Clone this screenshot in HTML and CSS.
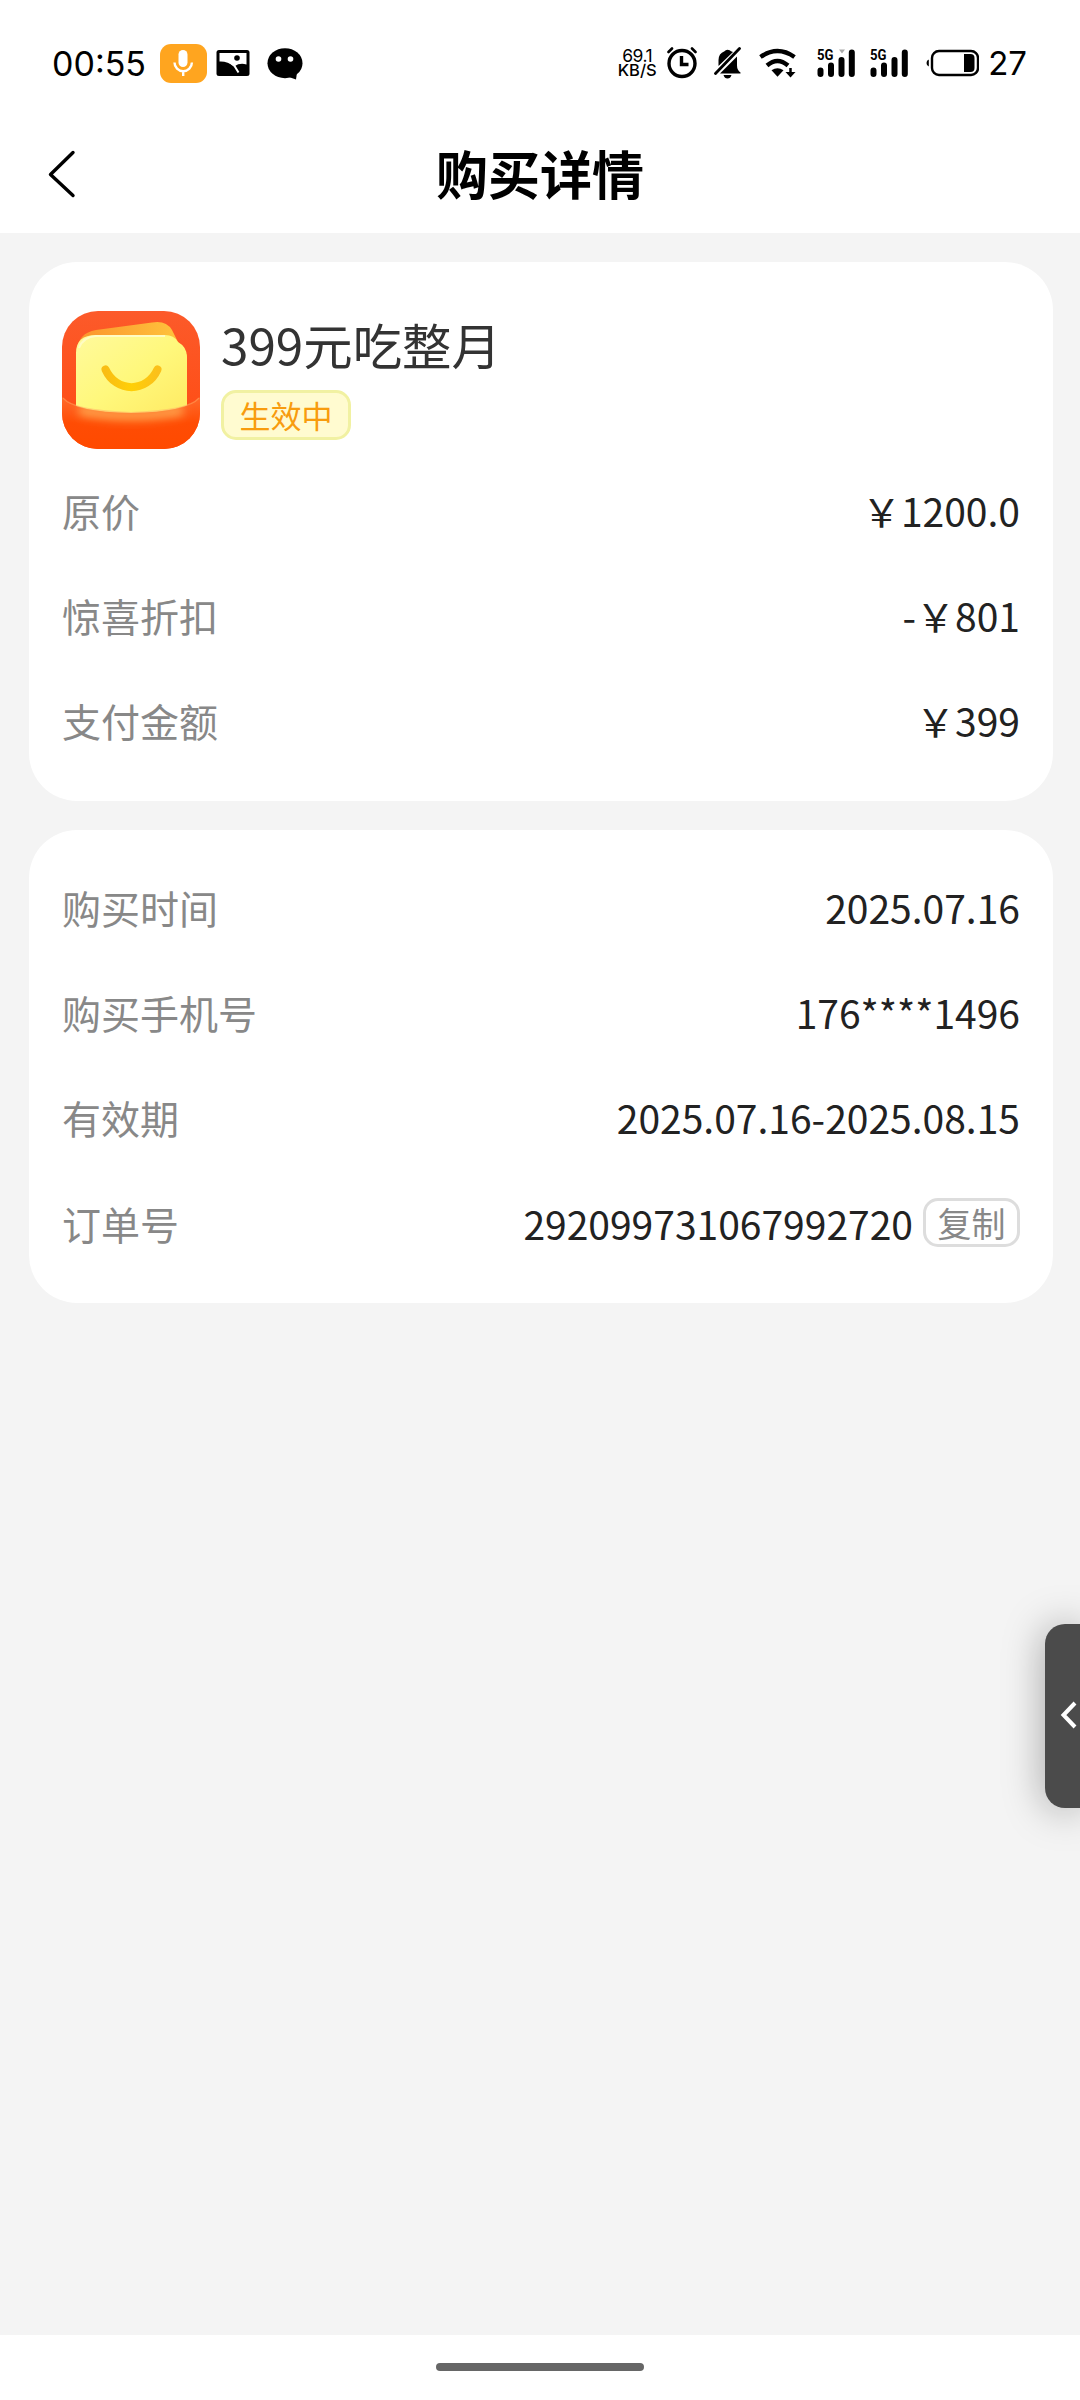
FILE: index.html
```html
<!DOCTYPE html>
<html lang="zh-CN">
<head>
    <meta charset="UTF-8">
    <meta name="viewport" content="width=device-width, initial-scale=1.0">
    <title>购买详情</title>
    <link rel="stylesheet" href="styles.css">
</head>
<body>
    <!-- Status bar -->
    <div class="status-bar">
        <div class="status-left">
            <span class="time">00:55</span>
            <span class="mic">
                <svg width="47" height="39" viewBox="0 0 47 39">
                    <rect x="18.5" y="6" width="9" height="17" rx="4.5" fill="#fff"/>
                    <path d="M14.5 18.5a8.7 8.7 0 0 0 17.4 0M23.2 27v5" fill="none" stroke="#fff" stroke-width="2.4"/>
                </svg>
            </span>
            <svg class="icon-picture" width="34" height="40" viewBox="0 0 34 40">
                <rect x="0.5" y="7" width="33" height="26" rx="2.5"/>
                <path d="M3.5 10h27v11.5Q24 19.5 18.5 23.2Q11 18 3.5 18.5z" fill="#fff"/>
                <path d="M14 19.5l4.5 3.5l4 6.5" fill="none" stroke="#fff" stroke-width="2"/>
                <circle cx="21" cy="15" r="2.8"/>
            </svg>
            <svg class="icon-chat" width="36" height="40" viewBox="0 0 36 40">
                <ellipse cx="18" cy="20.2" rx="17.5" ry="15"/>
                <path d="M19 33l10 3.5l1-7z"/>
                <circle cx="11.5" cy="16" r="2.8" fill="#fff"/>
                <circle cx="23.5" cy="16" r="2.8" fill="#fff"/>
            </svg>
        </div>
        <div class="status-right">
            <div class="speed">
                <span class="speed-num">69.1</span>
                <span class="speed-unit">KB/S</span>
            </div>
            <svg class="icon-alarm" width="30" height="40" viewBox="0 0 30 40">
                <circle cx="15" cy="20.5" r="13" fill="none" stroke="#000" stroke-width="3.4"/>
                <path d="M14.5 13v8.5h7" fill="none" stroke="#000" stroke-width="3.4"/>
                <path d="M1.5 9l3.5-3.5M28.5 9l-3.5-3.5" stroke="#000" stroke-width="2.6" stroke-linecap="round"/>
            </svg>
            <svg class="icon-bell" width="28" height="40" viewBox="0 0 28 40">
                <path d="M9.5 32h8q-1 3.5-4 3.5t-4-3.5z"/>
                <path d="M4.5 23v-6q0-6.5 6-8.8q1-1.5 3-1.5q2.5 0 3.5 1.5l2 .8zM23 13.5v9q0 4.5 3.5 7v1H6z"/>
                <path d="M1.5 30.5L25.5 5.5" stroke="#000" stroke-width="2.8" stroke-linecap="round"/>
            </svg>
            <svg class="icon-wifi" width="38" height="40" viewBox="0 0 38 40">
                <path d="M1.5 14q17-12 34 0M8 22.5q10.5-9 21 0" fill="none" stroke="#000" stroke-width="4.4"/>
                <path d="M12.5 27.2q6-4 12 0l-6 6.5z"/>
                <path d="M31.5 25v7" stroke="#000" stroke-width="2.5"/>
                <path d="M26.5 29h10l-5 5.5z"/>
            </svg>
            <svg class="icon-signal" width="39" height="40" viewBox="0 0 39 40">
                <text x="0" y="16.5" class="net" textLength="16.5" lengthAdjust="spacingAndGlyphs">5G</text>
                <path d="M3.5 27.5v3.5M14 22.5v8.5M24.5 17v14M34.8 9.5v21.5" stroke="#000" stroke-width="6" stroke-linecap="round"/>
                <path d="M22 6.5h6l-3 4z" fill="#aaa"/>
            </svg>
            <svg class="icon-signal" width="39" height="40" viewBox="0 0 39 40">
                <text x="0" y="16.5" class="net" textLength="16.5" lengthAdjust="spacingAndGlyphs">5G</text>
                <path d="M3.5 27.5v3.5M14 22.5v8.5M24.5 17v14M34.8 9.5v21.5" stroke="#000" stroke-width="6" stroke-linecap="round"/>
            </svg>
            <svg class="icon-battery" width="53" height="40" viewBox="0 0 53 40">
                <path d="M2.8 16.5v7q-2.3-.7-2.3-3.5t2.3-3.5z"/>
                <rect x="6" y="8" width="46" height="24" rx="7" fill="none" stroke="#000" stroke-width="2.4"/>
                <path d="M38 11h6.5q4 0 4 4v10q0 4-4 4H38z"/>
            </svg>
            <span class="battery-num">27</span>
        </div>
    </div>

    <!-- Title bar -->
    <div class="nav-bar">
        <svg class="back" width="28" height="48" viewBox="0 0 28 48">
            <path d="M25 2.5L2.5 24.5L25 45.5" fill="none" stroke="#000" stroke-width="3.4" stroke-linecap="round" stroke-linejoin="round"/>
        </svg>
        <h1>购买详情</h1>
    </div>

    <div class="content">
        <div class="card">
            <div class="product">
                <svg class="product-icon" width="138" height="138" viewBox="0 0 138 138">
                    <defs>
                        <linearGradient id="bg" x1="0" y1="0" x2="0" y2="1">
                            <stop offset="0" stop-color="#fc5a2a"/>
                            <stop offset="1" stop-color="#ff4a10"/>
                        </linearGradient>
                        <linearGradient id="back" x1="0" y1="0" x2="1" y2="0">
                            <stop offset="0" stop-color="#fb942c"/>
                            <stop offset="1" stop-color="#ffc73e"/>
                        </linearGradient>
                        <linearGradient id="face" x1="0" y1="0" x2="1" y2="1">
                            <stop offset="0" stop-color="#fffa9c"/>
                            <stop offset="0.5" stop-color="#fff87c"/>
                            <stop offset="1" stop-color="#ffea62"/>
                        </linearGradient>
                        <linearGradient id="smile" x1="0" y1="0" x2="1" y2="0">
                            <stop offset="0" stop-color="#f9bd14"/>
                            <stop offset="0.5" stop-color="#ffcf06"/>
                            <stop offset="1" stop-color="#fbc01a"/>
                        </linearGradient>
                        <linearGradient id="pocket" x1="0" y1="0" x2="0" y2="1">
                            <stop offset="0" stop-color="#ff6a2c"/>
                            <stop offset="0.5" stop-color="#ff4c04"/>
                            <stop offset="1" stop-color="#ff4a00"/>
                        </linearGradient>
                        <filter id="soft" x="-20%" y="-60%" width="140%" height="220%">
                            <feGaussianBlur stdDeviation="5"/>
                        </filter>
                        <clipPath id="round"><rect width="138" height="138" rx="36"/></clipPath>
                        <clipPath id="pocketClip"><path d="M0 86Q12 101 69 102Q126 101 138 86V138H0z"/></clipPath>
                    </defs>
                    <g clip-path="url(#round)">
                        <rect width="138" height="138" fill="url(#bg)"/>
                        <path d="M15 40Q16 22 34 19L90 11.5Q104 9 110 19L116 31L125 44V60H15z" fill="url(#back)"/>
                        <path d="M14 42Q14 24 34 24H103Q112 24 116 31Q125 36 125 46V105H14z" fill="url(#face)"/>
                        <path d="M17 37Q21 26 34 25H103" fill="none" stroke="#fffdd0" stroke-width="2" opacity="0.8"/>
                        <path d="M43.5 58.5C54 82 85 82 95.5 58.5" fill="none" stroke="url(#smile)" stroke-width="8" stroke-linecap="round"/>
                        <path d="M0 86Q12 101 69 102Q126 101 138 86V138H0z" fill="url(#pocket)"/>
                        <g clip-path="url(#pocketClip)">
                            <path d="M17 94Q69 106 121 94V104Q69 114 17 104z" fill="#ffa850" filter="url(#soft)"/>
                        </g>
                        <path d="M1 87Q12 100 69 101.5Q126 100 137 87" fill="none" stroke="#ffb066" stroke-width="1.2" opacity="0.5"/>
                    </g>
                </svg>
                <div class="product-info">
                    <div class="product-name">399元吃整月</div>
                    <span class="tag">生效中</span>
                </div>
            </div>
            <div class="row">
                <span class="label">原价</span>
                <span class="value">&#xFFE5;1200.0</span>
            </div>
            <div class="row">
                <span class="label">惊喜折扣</span>
                <span class="value">-&#xFFE5;801</span>
            </div>
            <div class="row">
                <span class="label">支付金额</span>
                <span class="value">&#xFFE5;399</span>
            </div>
        </div>

        <div class="card">
            <div class="row">
                <span class="label">购买时间</span>
                <span class="value">2025.07.16</span>
            </div>
            <div class="row">
                <span class="label">购买手机号</span>
                <span class="value">176****1496</span>
            </div>
            <div class="row">
                <span class="label">有效期</span>
                <span class="value">2025.07.16-2025.08.15</span>
            </div>
            <div class="row">
                <span class="label">订单号</span>
                <span class="value">292099731067992720</span>
                <button class="copy">复制</button>
            </div>
        </div>
    </div>

    <div class="home-area">
        <div class="home-bar"></div>
    </div>

    <!-- Floating side handle -->
    <div class="side-handle">
        <svg width="18" height="28" viewBox="0 0 18 28">
            <path d="M15 2L3.5 14L15 26" fill="none" stroke="#fff" stroke-width="4"/>
        </svg>
    </div>
</body>
</html>
```

FILE: styles.css
```css
* {
    margin: 0;
    padding: 0;
    box-sizing: border-box;
}

body {
    position: relative;
    display: flex;
    flex-direction: column;
    height: 2400px;
    overflow: hidden;
    background: #f4f4f4;
    font-family: "Noto Sans CJK SC", sans-serif;
}

svg {
    display: block;
    flex-shrink: 0;
}

/* Status bar */
.status-bar {
    display: flex;
    justify-content: space-between;
    height: 126px;
    padding: 0 53px 0 52px;
    background: #fff;
    font-family: Inter, sans-serif;
    color: #000;
}

.status-left, .status-right {
    display: flex;
    align-items: center;
}

.time {
    width: 108px;
    font-size: 34px;
}

.mic {
    background: #ffa51f;
    border-radius: 11px;
}

.icon-picture {
    margin-left: 9px;
}

.icon-chat {
    margin-left: 17px;
}

.speed {
    display: flex;
    flex-direction: column;
    align-items: center;
    width: 42px;
    line-height: 15.5px;
}

.speed-num {
    font-size: 17.5px;
    letter-spacing: -0.5px;
}

.speed-unit {
    font-size: 16.5px;
    font-weight: 500;
}

.icon-alarm {
    margin-left: 9px;
}

.icon-bell {
    margin-left: 17px;
}

.icon-wifi {
    margin-left: 17px;
}

.icon-signal {
    margin-left: 14px;
}

.icon-wifi + .icon-signal {
    margin-left: 20px;
}

.net {
    font-family: Roboto, sans-serif;
    font-size: 14px;
    font-weight: 700;
}

.icon-battery {
    margin-left: 17px;
}

.battery-num {
    margin-left: 9px;
    font-size: 33px;
    line-height: 40px;
}

/* Title bar */
.nav-bar {
    display: flex;
    align-items: center;
    height: 107px;
    padding: 0 48px 12px;
    background: #fff;
}

.nav-bar h1 {
    flex: 1;
    height: 78px;
    margin-right: 28px;
    text-align: center;
    font-size: 52px;
    font-weight: 700;
    line-height: 76px;
}

/* Cards */
.content {
    flex: 1;
    display: flex;
    flex-direction: column;
    gap: 29px;
    padding: 29px 27px 0 29px;
}

.card {
    padding: 24px 33px 28px;
    background: #fff;
    border-radius: 48px;
}

.product {
    display: flex;
    gap: 21px;
    padding-top: 25px;
    margin-bottom: 8px;
}

.product-info {
    display: flex;
    flex-direction: column;
    align-items: flex-start;
}

.product-name {
    height: 79px;
    font-size: 49.4px;
    line-height: 66px;
    color: #333;
}

.tag {
    height: 50px;
    padding: 0 15.5px;
    border: 3px solid #f1f1a2;
    border-radius: 15px;
    background: #fffbd0;
    font-size: 31px;
    line-height: 44px;
    color: #f89c0e;
}

.row {
    display: flex;
    align-items: center;
    height: 105.35px;
    font-size: 39px;
}

.label {
    margin-right: auto;
    color: #888;
}

.value {
    color: #222;
}

.copy {
    width: 97px;
    height: 49px;
    margin-left: 10px;
    border: 3px solid #ddd;
    border-radius: 15px;
    background: #fff;
    font-family: inherit;
    font-size: 34px;
    line-height: 40px;
    color: #888;
}

/* Bottom gesture area */
.home-area {
    height: 65px;
    padding-top: 28px;
    background: #fff;
}

.home-bar {
    width: 208px;
    height: 8px;
    margin: 0 auto;
    border-radius: 4px;
    background: #666;
}

.side-handle {
    position: absolute;
    top: 1624px;
    right: 0;
    display: flex;
    align-items: center;
    width: 35px;
    height: 184px;
    padding: 0 0 2px 15px;
    border-radius: 20px 0 0 20px;
    background: #4b4b4b;
    box-shadow: 0 2px 40px rgba(0, 0, 0, 0.35);
}
```
